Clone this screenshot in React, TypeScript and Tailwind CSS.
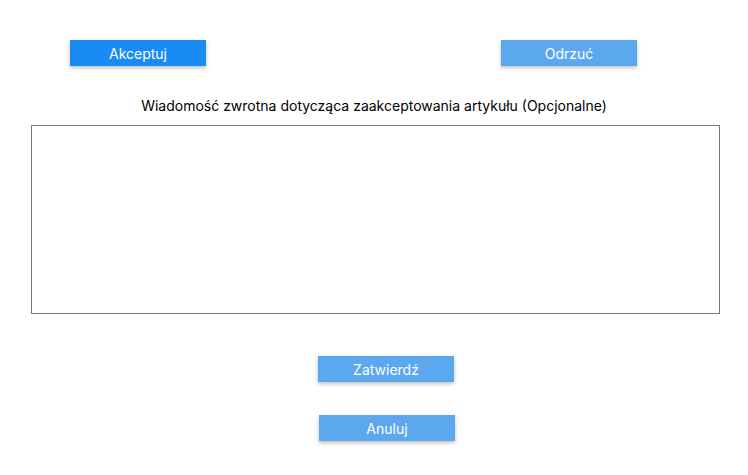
const btn =
  "w-[136px] h-[26px] flex items-center justify-center text-white text-[14px] shadow-[0_2px_4px_rgba(0,0,0,0.25)]";

export default function App() {
  return (
    <div className="w-[748px] h-[475px] bg-white font-['Inter',sans-serif] text-black">
      <div className="flex pt-[40px] pl-[70px] pr-[111px] justify-between">
        <button className={`${btn} bg-[#1a8af5]`}>Akceptuj</button>
        <button className={`${btn} bg-[#5ba8ef]`}>Odrzuć</button>
      </div>
      <p className="mt-[30px] text-center text-[14px] leading-[20px]">
        Wiadomość zwrotna dotycząca zaakceptowania artykułu (Opcjonalne)
      </p>
      <textarea className="block mt-[9px] ml-[31px] w-[689px] h-[189px] border border-[#777] resize-none outline-none" />
      <button className={`${btn} bg-[#5ba8ef] mt-[42px] ml-[318px]`}>Zatwierdź</button>
      <button className={`${btn} bg-[#5ba8ef] mt-[33px] ml-[319px]`}>Anuluj</button>
    </div>
  );
}
